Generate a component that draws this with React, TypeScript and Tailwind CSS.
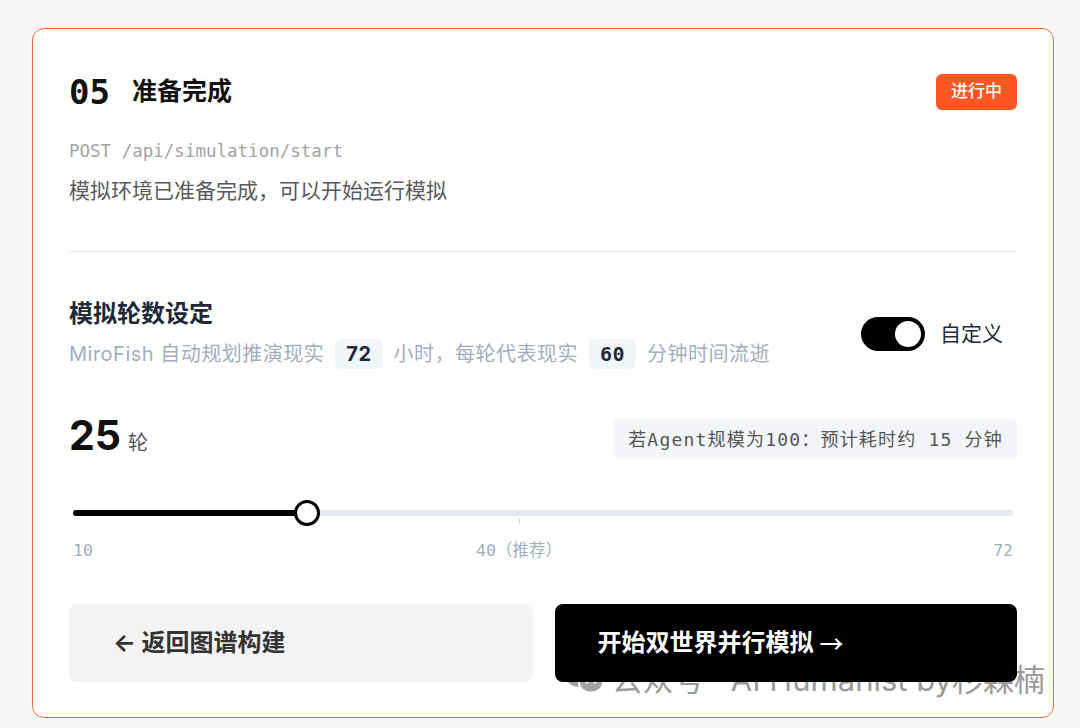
import React from 'react';

const sans = "font-['Inter','Noto_Sans_CJK_SC',sans-serif]";
const mono = "font-['DejaVu_Sans_Mono','Noto_Sans_CJK_SC',monospace]";

const Chip: React.FC<{ children: React.ReactNode; monoFont?: boolean }> = ({ children, monoFont }) => (
  <span
    className={`mx-[11px] inline-flex h-[30px] items-center rounded-md bg-[#f1f5f9] px-[11px] text-[20px] font-bold text-[#1e293b] ${
      monoFont ? mono : sans
    }`}
  >
    {children}
  </span>
);

const App: React.FC = () => {
  return (
    <div className={`min-h-[728px] w-[1080px] bg-[#f7f7f7] pt-[28px] pl-[32px] ${sans}`}>
      <div className="relative w-[1022px] rounded-[12px] border-[1.5px] border-[#f26b3a] bg-white px-[36px] pt-[45px] pb-[35px]">
        {/* Header */}
        <div className="flex h-[36px] items-center justify-between">
          <div className="flex items-center">
            <span className={`text-[34px] font-bold leading-none text-[#111] ${mono}`}>05</span>
            <span className="ml-[22px] text-[25px] font-bold text-[#111]">准备完成</span>
          </div>
          <span className="flex h-[36px] w-[81px] items-center justify-center rounded-md bg-[#ff5722] text-[17px] font-medium text-white">
            进行中
          </span>
        </div>

        <div className={`mt-[29px] text-[17.5px] leading-6 text-[#a3a3a3] ${mono}`}>POST /api/simulation/start</div>
        <div className="mt-[14px] text-[21px] leading-7 text-[#595959]">模拟环境已准备完成，可以开始运行模拟</div>

        <div className="mt-[46px] h-px bg-[#e8e8e8]" />

        {/* Rounds setting */}
        <div className="mt-[46px] flex items-center justify-between">
          <div>
            <div className="text-[24px] font-bold leading-[32px] text-[#1f2937]">模拟轮数设定</div>
            <div className="mt-[9px] flex items-center text-[20px] tracking-[0.5px] text-[#a0aec0]">
              <span>MiroFish 自动规划推演现实</span>
              <Chip>72</Chip>
              <span>小时，每轮代表现实</span>
              <Chip monoFont>60</Chip>
              <span>分钟时间流逝</span>
            </div>
          </div>
          <div className="mr-[14px] flex items-center gap-[15px]">
            <div className="flex h-[34px] w-[64px] items-center justify-end rounded-full bg-black px-[2px]">
              <div className="h-[30px] w-[30px] rounded-full border-2 border-black bg-white" />
            </div>
            <span className="text-[21px] text-[#1f2937]">自定义</span>
          </div>
        </div>

        {/* Value row */}
        <div className="mt-[42px] flex items-end justify-between">
          <div className="flex items-baseline">
            <span className="text-[41px] font-bold leading-[48px] text-[#111]">25</span>
            <span className="ml-[7px] text-[20px] text-[#555]">轮</span>
          </div>
          <div className={`flex h-[40px] items-center rounded-md bg-[#f3f5f8] px-[14px] text-[18px] tracking-[1.2px] text-[#555] ${mono}`}>
            若Agent规模为100：预计耗时约 15 分钟
          </div>
        </div>

        {/* Slider */}
        <div className="mt-[41px] px-[4px]">
          <div className="relative h-[26px]">
            <div className="absolute top-[10px] right-0 left-0 h-[6px] rounded-full bg-[#e3e8f0]" />
            <div className="absolute top-[10px] left-0 h-[6px] w-[234px] rounded-full bg-black" />
            <div className="absolute top-[18px] left-[446px] h-[6px] w-px bg-[#cbd5e1]" />
            <div className="absolute top-0 left-[221px] h-[26px] w-[26px] rounded-full border-[3px] border-black bg-white" />
          </div>
          <div className={`relative mt-[15px] flex h-[20px] items-center justify-between text-[16.5px] text-[#a0aec0] ${mono}`}>
            <span>10</span>
            <span className="absolute left-[446px] -translate-x-1/2">40（推荐）</span>
            <span>72</span>
          </div>
        </div>

        {/* Watermark (behind buttons) */}
        <div className="pointer-events-none absolute right-[8px] bottom-[14px] flex items-center gap-[6px] text-[31px] text-[#9a9a9a]">
          <svg width="40" height="30" viewBox="0 0 40 30" fill="#a3a3a3">
            <ellipse cx="14" cy="12" rx="13" ry="10" />
            <ellipse cx="26" cy="18" rx="12" ry="9.5" stroke="white" strokeWidth="2" />
            <circle cx="22" cy="17" r="1.6" fill="white" />
            <circle cx="30" cy="17" r="1.6" fill="white" />
          </svg>
          <span>公众号 · AI Humanist by杉森楠</span>
        </div>

        {/* Buttons */}
        <div className="relative mt-[43px] flex gap-[22px]">
          <button className="flex h-[78px] flex-1 items-center rounded-lg bg-[#f3f3f3] pl-[44px] text-[24px] font-bold text-[#333]">
            ← 返回图谱构建
          </button>
          <button className="flex h-[78px] flex-1 items-center rounded-lg bg-black pl-[43px] text-[24px] font-bold text-white">
            开始双世界并行模拟<span className="ml-[6px] font-['Noto_Sans_CJK_SC',sans-serif] font-medium">→</span>
          </button>
        </div>
      </div>
    </div>
  );
};

export default App;
